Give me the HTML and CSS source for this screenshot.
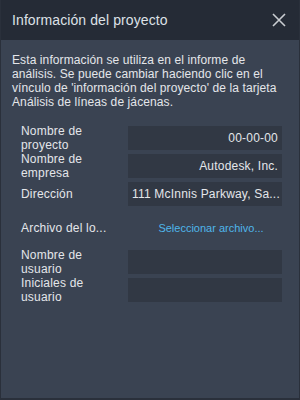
FILE: index.html
```html
<!DOCTYPE html>
<html lang="es">
<head>
<meta charset="utf-8">
<link rel="stylesheet" href="styles.css">
</head>
<body>
<div class="dialog">
  <header class="head">
    <span class="title">Información del proyecto</span>
    <svg class="close" width="14" height="14" viewBox="0 0 14 14"><path d="M1 1 L13 13 M13 1 L1 13" stroke="#c9ccd1" stroke-width="1.6" fill="none"/></svg>
  </header>
  <div class="body">
    <p class="desc">Esta información se utiliza en el informe de<br>análisis. Se puede cambiar haciendo clic en el<br>vínculo de 'información del proyecto' de la tarjeta<br>Análisis de líneas de jácenas.</p>
    <div class="form">
      <div class="row"><span class="label">Nombre de<br>proyecto</span><span class="field">00-00-00</span></div>
      <div class="row"><span class="label">Nombre de<br>empresa</span><span class="field">Autodesk, Inc.</span></div>
      <div class="row"><span class="label">Dirección</span><span class="field">111 McInnis Parkway, Sa...</span></div>
      <div class="row file"><span class="label">Archivo del lo...</span><span class="link">Seleccionar archivo...</span></div>
      <div class="row"><span class="label">Nombre de<br>usuario</span><span class="field"></span></div>
      <div class="row"><span class="label">Iniciales de<br>usuario</span><span class="field"></span></div>
    </div>
  </div>
</div>
</body>
</html>
```
FILE: styles.css
```css
html, body { margin: 0; padding: 0; }
body {
  width: 300px;
  height: 400px;
  background: #3a4352;
  font-family: "Liberation Sans", Arial, sans-serif;
  color: #e4e6ea;
}
.dialog {
  width: 300px;
  height: 400px;
  box-sizing: border-box;
  display: flex;
  flex-direction: column;
  border-left: 1px solid #2a303b;
  border-bottom: 2px solid #2a303b;
  border-right: 1px solid #2a303b;
}
.head {
  height: 40px;
  flex: none;
  background: #252b36;
  display: flex;
  align-items: center;
  justify-content: space-between;
  padding: 0 13px 0 11px;
}
.title { font-size: 14px; color: #dde1e7; letter-spacing: 0.1px; }
.close { display: block; }
.body {
  flex: 1;
  background: #3a4352;
  padding: 13px 0 0 11px;
}
.desc {
  margin: 0;
  font-size: 12px;
  line-height: 14px;
  letter-spacing: 0.1px;
  white-space: nowrap;
}
.form {
  margin-top: 17px;
  padding-left: 9px;
  display: flex;
  flex-direction: column;
  gap: 4px;
}
.row {
  display: flex;
  align-items: center;
  height: 24px;
}
.label {
  width: 107px;
  font-size: 12px;
  line-height: 14px;
  letter-spacing: 0.2px;
}
.field {
  width: 154px;
  height: 24px;
  box-sizing: border-box;
  background: #313844;
  font-size: 12px;
  letter-spacing: 0.2px;
  line-height: 24px;
  text-align: right;
  padding: 0 4px;
  white-space: nowrap;
}
.row.file { height: 36px; }
.link {
  width: 154px;
  box-sizing: border-box;
  padding-left: 12px;
  text-align: center;
  font-size: 11px;
  color: #4fb6ea;
}
```
